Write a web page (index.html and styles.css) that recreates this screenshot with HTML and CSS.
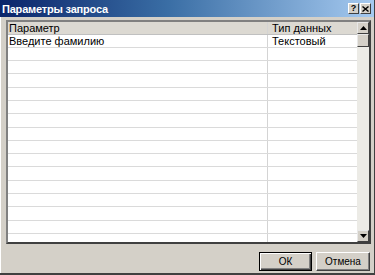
FILE: index.html
```html
<!DOCTYPE html>
<html>
<head>
<meta charset="utf-8">
<link rel="stylesheet" href="styles.css">
</head>
<body>
<div class="window">
  <div class="titlebar">
    <span class="title">Параметры запроса</span>
    <div class="controls">
      <div class="cbtn">?</div>
      <div class="cbtn close">
        <svg width="7" height="6" viewBox="0 0 7 6"><path d="M0.5 0.5L6.5 5.5M6.5 0.5L0.5 5.5" stroke="#000" stroke-width="1.4"/></svg>
      </div>
    </div>
  </div>
  <div class="body">
    <div class="grid">
      <div class="table">
        <div class="row head"><div class="c1">Параметр</div><div class="c2">Тип данных</div></div>
        <div class="row"><div class="c1">Введите фамилию</div><div class="c2">Текстовый</div></div>
        <div class="row"><div class="c1"></div><div class="c2"></div></div>
        <div class="row"><div class="c1"></div><div class="c2"></div></div>
        <div class="row"><div class="c1"></div><div class="c2"></div></div>
        <div class="row"><div class="c1"></div><div class="c2"></div></div>
        <div class="row"><div class="c1"></div><div class="c2"></div></div>
        <div class="row"><div class="c1"></div><div class="c2"></div></div>
        <div class="row"><div class="c1"></div><div class="c2"></div></div>
        <div class="row"><div class="c1"></div><div class="c2"></div></div>
        <div class="row"><div class="c1"></div><div class="c2"></div></div>
        <div class="row"><div class="c1"></div><div class="c2"></div></div>
        <div class="row"><div class="c1"></div><div class="c2"></div></div>
        <div class="row"><div class="c1"></div><div class="c2"></div></div>
        <div class="row"><div class="c1"></div><div class="c2"></div></div>
        <div class="row"><div class="c1"></div><div class="c2"></div></div>
        <div class="row"><div class="c1"></div><div class="c2"></div></div>
        <div class="row"><div class="c1"></div><div class="c2"></div></div>
      </div>
      <div class="scrollbar">
        <div class="sbtn"><svg width="7" height="4" viewBox="0 0 7 4"><path d="M3.5 0L7 4H0Z" fill="#000"/></svg></div>
        <div class="thumb"></div>
        <div class="track"></div>
        <div class="sbtn"><svg width="7" height="4" viewBox="0 0 7 4"><path d="M0 0H7L3.5 4Z" fill="#000"/></svg></div>
      </div>
    </div>
    <div class="buttons">
      <div class="btn default">ОК</div>
      <div class="btn">Отмена</div>
    </div>
  </div>
</div>
</body>
</html>
```
FILE: styles.css
```css
html, body {
  margin: 0;
  padding: 0;
  background: #d4d0c8;
}
.window {
  width: 375px;
  height: 275px;
  box-sizing: border-box;
  background: #d4d0c8;
  display: flex;
  flex-direction: column;
  border-right: 1px solid #404040;
  border-bottom: 2px solid #404040;
  font-family: "Liberation Sans", Arial, sans-serif;
  font-size: 11px;
  color: #000;
}
.titlebar {
  height: 17px;
  flex: none;
  display: flex;
  align-items: center;
  padding: 0 3px 0 2px;
  background: linear-gradient(to right, #0a246a 0%, #3a6ea5 45%, #a6caf0 100%);
}
.title {
  color: #fff;
  font-weight: bold;
  font-size: 11px;
  letter-spacing: -0.2px;
}
.controls {
  margin-left: auto;
  display: flex;
  gap: 1px;
}
.cbtn {
  width: 9px;
  height: 9px;
  background: #d4d0c8;
  border-style: solid;
  border-width: 1px;
  border-color: #fff #404040 #404040 #fff;
  font-size: 9px;
  font-weight: bold;
  line-height: 9px;
  text-align: center;
  display: flex;
  align-items: center;
  justify-content: center;
}
.body {
  flex: 1;
  display: flex;
  flex-direction: column;
  border-left: 1px solid #fff;
  padding: 3px 3px 0 5px;
}
.grid {
  height: 224px;
  box-sizing: border-box;
  display: flex;
  background: #fff;
  border-style: solid;
  border-width: 2px;
  border-color: #808080 #404040 #404040 #808080;
}
.table {
  flex: 1;
  overflow: hidden;
}
.row {
  display: flex;
  height: 13.3px;
  box-sizing: border-box;
  border-bottom: 1px solid #dadada;
}
.row.head {
  height: 12.5px;
  background: #dcd9d2;
  border-bottom: 1px solid #c0c0c0;
}
.c1 {
  width: 260px;
  box-sizing: border-box;
  padding-left: 1px;
  border-right: 1px solid #d4d4d4;
  line-height: 12px;
  white-space: nowrap;
}
.c2 {
  flex: 1;
  padding-left: 4px;
  line-height: 12px;
  white-space: nowrap;
}
.scrollbar {
  width: 12px;
  flex: none;
  display: flex;
  flex-direction: column;
  background: #ecebe6;
}
.sbtn, .thumb {
  height: 12px;
  box-sizing: border-box;
  background: #d4d0c8;
  border-style: solid;
  border-width: 1px;
  border-color: #e8e8e8 #404040 #404040 #e8e8e8;
  display: flex;
  align-items: center;
  justify-content: center;
}
.thumb {
  height: 13px;
}
.track {
  flex: 1;
}
.buttons {
  display: flex;
  justify-content: flex-end;
  gap: 4px;
  margin-top: 8px;
  padding-right: 1px;
}
.btn {
  width: 54px;
  height: 19px;
  box-sizing: border-box;
  border-style: solid;
  border-width: 1px;
  border-color: #fff #404040 #404040 #fff;
  box-shadow: inset -1px -1px 0 #808080;
  display: flex;
  align-items: center;
  justify-content: center;
  font-size: 10px;
}
.btn.default {
  border: 1px solid #000;
  box-shadow: inset 1px 1px 0 #fff, inset -1px -1px 0 #404040, inset -2px -2px 0 #808080;
  width: 53px;
}
```
